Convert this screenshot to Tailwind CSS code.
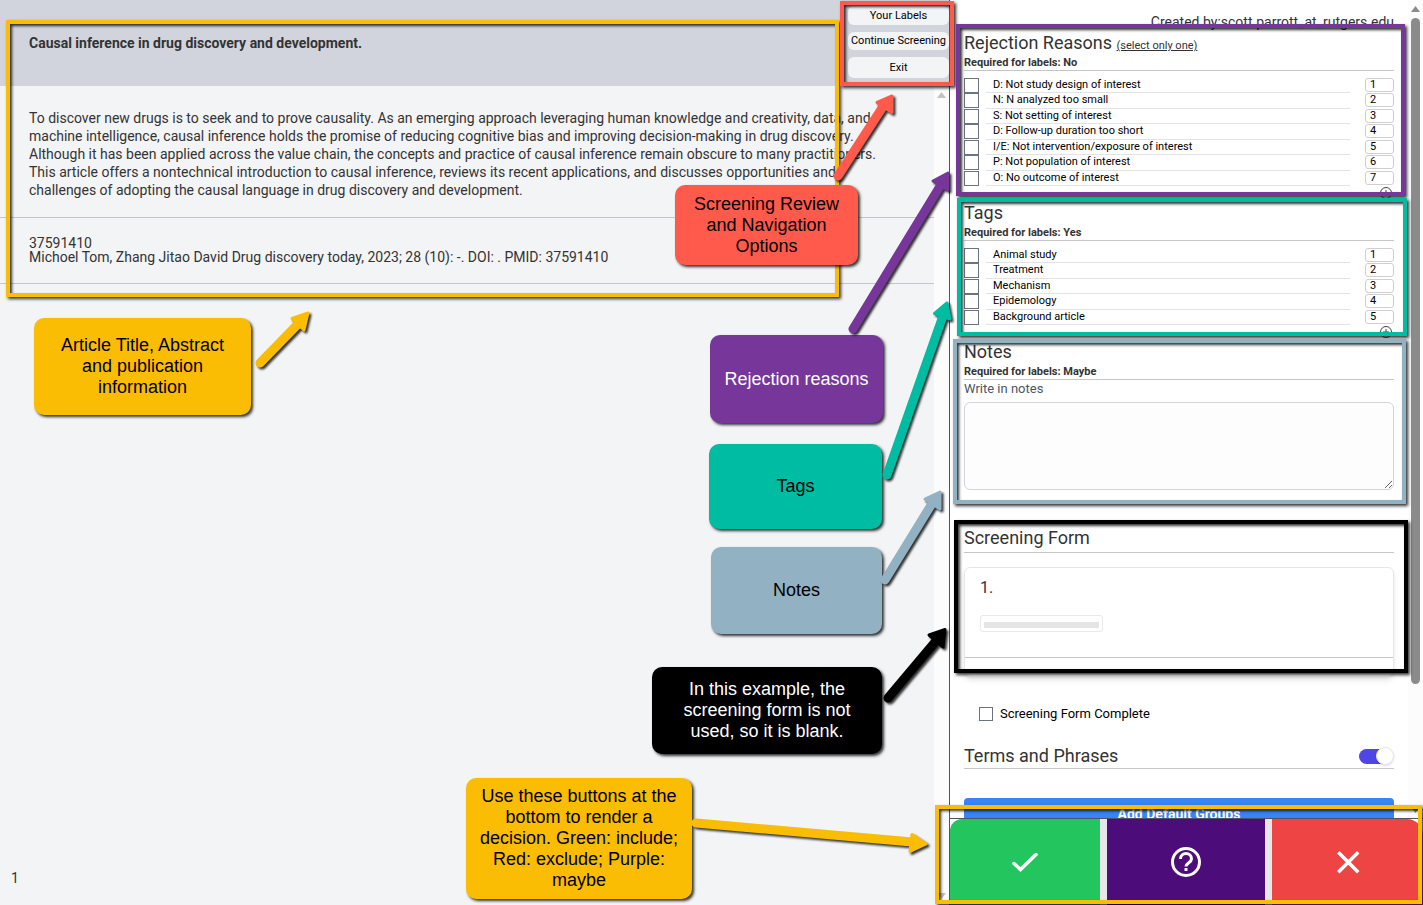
<!DOCTYPE html>
<html lang="en">
<head>
<meta charset="utf-8">
<title>Article Screening</title>
<script src="https://cdn.jsdelivr.net/npm/@tailwindcss/browser@4"></script>
</head>
<body class="relative flex h-screen overflow-hidden bg-white font-['Roboto',sans-serif] text-[#333]">

<main class="flex min-w-0 flex-1 flex-col bg-[#f3f4f6]">
  <header class="flex h-[86px] shrink-0 bg-[#d1d4dc]">
    <h1 class="flex-1 pt-[34px] pl-[29px] text-sm leading-[18px] font-bold">Causal inference in drug discovery and development.</h1>
    <nav class="flex w-[101px] flex-col gap-[7px] pt-[6px] text-[11px] leading-[18px] text-black">
      <button class="h-[19px] rounded-md bg-[#f3f4f6]">Your Labels</button>
      <button class="h-[18px] rounded-md bg-[#f3f4f6]">Continue Screening</button>
      <button class="h-[21px] rounded-md bg-[#f3f4f6]">Exit</button>
    </nav>
  </header>
  <div class="flex min-h-0 flex-1">
    <div class="flex min-w-0 flex-1 flex-col text-sm">
      <p class="border-b border-[#c4c6ca] pt-[23px] pr-[30px] pb-[18px] pl-[29px] leading-[18px]">To discover new drugs is to seek and to prove causality. As an emerging approach leveraging human knowledge and creativity, data, and machine intelligence, causal inference holds the promise of reducing cognitive bias and improving decision-making in drug discovery. Although it has been applied across the value chain, the concepts and practice of causal inference remain obscure to many practitioners. This article offers a nontechnical introduction to causal inference, reviews its recent applications, and discusses opportunities and challenges of adopting the causal language in drug discovery and development.</p>
      <div class="border-b border-[#c4c6ca] pt-[18px] pb-[19px] pl-[29px] leading-[14px]">
        <p>37591410</p>
        <p>Michoel Tom, Zhang Jitao David Drug discovery today, 2023; 28 (10): -. DOI: . PMID: 37591410</p>
      </div>
      <p class="mt-auto pb-[18px] pl-[11px] leading-[18px]">1</p>
    </div>
    <div class="flex w-[15px] flex-col items-center justify-between bg-[#fcfcfc] py-[6px]">
      <svg class="h-[6px] w-[9px]" viewBox="0 0 9 6"><path d="M4.500 0L9 6H0z" fill="#c2c2c2"/></svg>
      <svg class="h-[6px] w-[9px]" viewBox="0 0 9 6"><path d="M4.500 6L9 0H0z" fill="#c2c2c2"/></svg>
    </div>
  </div>
</main>

<aside class="flex w-[474px] shrink-0 flex-col border-l border-[#4b5563] bg-white">
  <div class="flex min-h-0 flex-1 overflow-hidden">
    <div class="min-w-0 flex-1 overflow-hidden pr-[14px] pl-[14px]">
      <p class="pt-[13px] text-right text-sm leading-[18px]">Created by:scott.parrott_at_rutgers.edu</p>

      <section>
        <h2 class="text-lg leading-6">Rejection Reasons <a href="#" class="text-[11px] leading-none underline">(select only one)</a></h2>
        <p class="border-b border-[#c4c6ca] text-[11px] leading-[15px] font-bold">Required for labels: No</p>
        <div class="mt-[7px] flex h-[108px] flex-col text-[11px] leading-[14px] text-black">
          <div class="flex flex-1 gap-[7px]"><input id="r1" type="checkbox" class="size-[15px] appearance-none border border-[#6b7280] bg-white"><label for="r1" class="mr-[8px] flex-1 border-b border-[#e2e3e5] pl-[7px] leading-[13px]">D: Not study design of interest</label><input aria-label="Shortcut" value="1" class="h-[14px] w-[29px] rounded-[3px] border border-[#cfcfcf] px-[4px] outline-none"></div>
          <div class="flex flex-1 gap-[7px]"><input id="r2" type="checkbox" class="size-[15px] appearance-none border border-[#6b7280] bg-white"><label for="r2" class="mr-[8px] flex-1 border-b border-[#e2e3e5] pl-[7px] leading-[13px]">N: N analyzed too small</label><input aria-label="Shortcut" value="2" class="h-[14px] w-[29px] rounded-[3px] border border-[#cfcfcf] px-[4px] outline-none"></div>
          <div class="flex flex-1 gap-[7px]"><input id="r3" type="checkbox" class="size-[15px] appearance-none border border-[#6b7280] bg-white"><label for="r3" class="mr-[8px] flex-1 border-b border-[#e2e3e5] pl-[7px] leading-[13px]">S: Not setting of interest</label><input aria-label="Shortcut" value="3" class="h-[14px] w-[29px] rounded-[3px] border border-[#cfcfcf] px-[4px] outline-none"></div>
          <div class="flex flex-1 gap-[7px]"><input id="r4" type="checkbox" class="size-[15px] appearance-none border border-[#6b7280] bg-white"><label for="r4" class="mr-[8px] flex-1 border-b border-[#e2e3e5] pl-[7px] leading-[13px]">D: Follow-up duration too short</label><input aria-label="Shortcut" value="4" class="h-[14px] w-[29px] rounded-[3px] border border-[#cfcfcf] px-[4px] outline-none"></div>
          <div class="flex flex-1 gap-[7px]"><input id="r5" type="checkbox" class="size-[15px] appearance-none border border-[#6b7280] bg-white"><label for="r5" class="mr-[8px] flex-1 border-b border-[#e2e3e5] pl-[7px] leading-[13px]">I/E: Not intervention/exposure of interest</label><input aria-label="Shortcut" value="5" class="h-[14px] w-[29px] rounded-[3px] border border-[#cfcfcf] px-[4px] outline-none"></div>
          <div class="flex flex-1 gap-[7px]"><input id="r6" type="checkbox" class="size-[15px] appearance-none border border-[#6b7280] bg-white"><label for="r6" class="mr-[8px] flex-1 border-b border-[#e2e3e5] pl-[7px] leading-[13px]">P: Not population of interest</label><input aria-label="Shortcut" value="6" class="h-[14px] w-[29px] rounded-[3px] border border-[#cfcfcf] px-[4px] outline-none"></div>
          <div class="flex flex-1 gap-[7px]"><input id="r7" type="checkbox" class="size-[15px] appearance-none border border-[#6b7280] bg-white"><label for="r7" class="mr-[8px] flex-1 border-b border-[#e2e3e5] pl-[7px] leading-[13px]">O: No outcome of interest</label><input aria-label="Shortcut" value="7" class="h-[14px] w-[29px] rounded-[3px] border border-[#cfcfcf] px-[4px] outline-none"></div>
        </div>
        <div class="flex h-[15px] justify-end pt-px pr-[2px]"><button aria-label="Add reason" class="size-[12px]"><svg viewBox="0 0 12 12" fill="none" stroke="#444"><circle cx="6" cy="6" r="5.500"/><path d="M6 3v6M3 6h6"/></svg></button></div>
      </section>

      <section>
        <h2 class="text-lg leading-6">Tags</h2>
        <p class="border-b border-[#c4c6ca] text-[11px] leading-[15px] font-bold">Required for labels: Yes</p>
        <div class="mt-[7px] flex h-[77px] flex-col text-[11px] leading-[14px] text-black">
          <div class="flex flex-1 gap-[7px]"><input id="t1" type="checkbox" class="size-[15px] appearance-none border border-[#6b7280] bg-white"><label for="t1" class="mr-[8px] flex-1 border-b border-[#e2e3e5] pl-[7px] leading-[13px]">Animal study</label><input aria-label="Shortcut" value="1" class="h-[14px] w-[29px] rounded-[3px] border border-[#cfcfcf] px-[4px] outline-none"></div>
          <div class="flex flex-1 gap-[7px]"><input id="t2" type="checkbox" class="size-[15px] appearance-none border border-[#6b7280] bg-white"><label for="t2" class="mr-[8px] flex-1 border-b border-[#e2e3e5] pl-[7px] leading-[13px]">Treatment</label><input aria-label="Shortcut" value="2" class="h-[14px] w-[29px] rounded-[3px] border border-[#cfcfcf] px-[4px] outline-none"></div>
          <div class="flex flex-1 gap-[7px]"><input id="t3" type="checkbox" class="size-[15px] appearance-none border border-[#6b7280] bg-white"><label for="t3" class="mr-[8px] flex-1 border-b border-[#e2e3e5] pl-[7px] leading-[13px]">Mechanism</label><input aria-label="Shortcut" value="3" class="h-[14px] w-[29px] rounded-[3px] border border-[#cfcfcf] px-[4px] outline-none"></div>
          <div class="flex flex-1 gap-[7px]"><input id="t4" type="checkbox" class="size-[15px] appearance-none border border-[#6b7280] bg-white"><label for="t4" class="mr-[8px] flex-1 border-b border-[#e2e3e5] pl-[7px] leading-[13px]">Epidemology</label><input aria-label="Shortcut" value="4" class="h-[14px] w-[29px] rounded-[3px] border border-[#cfcfcf] px-[4px] outline-none"></div>
          <div class="flex flex-1 gap-[7px]"><input id="t5" type="checkbox" class="size-[15px] appearance-none border border-[#6b7280] bg-white"><label for="t5" class="mr-[8px] flex-1 border-b border-[#e2e3e5] pl-[7px] leading-[13px]">Background article</label><input aria-label="Shortcut" value="5" class="h-[14px] w-[29px] rounded-[3px] border border-[#cfcfcf] px-[4px] outline-none"></div>
        </div>
        <div class="flex h-[15px] justify-end pt-px pr-[2px]"><button aria-label="Add tag" class="size-[12px]"><svg viewBox="0 0 12 12" fill="none" stroke="#444"><circle cx="6" cy="6" r="5.500"/><path d="M6 3v6M3 6h6"/></svg></button></div>
      </section>

      <section>
        <h2 class="text-lg leading-6">Notes</h2>
        <p class="border-b border-[#c4c6ca] text-[11px] leading-[15px] font-bold">Required for labels: Maybe</p>
        <label for="notes" class="block text-[13px] leading-[18px] text-[#4b5563]">Write in notes</label>
        <textarea id="notes" class="mt-[4px] block h-[88px] w-full rounded-md border border-[#d1d5db] bg-[#fdfdfd]"></textarea>
      </section>

      <section class="pt-9">
        <h2 class="border-b border-[#c4c6ca] pb-[2px] text-lg leading-6">Screening Form</h2>
        <div class="mt-[14px] h-[110px] rounded-md border border-[#e5e7eb] pt-[10px] shadow-md">
          <p class="pl-[15px] text-base leading-5">1.</p>
          <div class="mt-[17px] ml-[15px] h-[17px] w-[123px] rounded-[3px] border border-[#e8e8e8] px-[3px] pt-[6px]"><div class="h-[6px] bg-[#e5e5e5]"></div></div>
          <div class="mt-[25px] border-t border-[#c4c6ca]"></div>
        </div>
        <div class="flex items-center gap-[7px] pt-[27px] pl-[15px] text-[13px] leading-5 text-black">
          <input id="done" type="checkbox" class="size-[14px] appearance-none border border-[#6b7280] bg-white"><label for="done">Screening Form Complete</label>
        </div>
      </section>

      <section class="pt-5">
        <div class="flex items-center justify-between border-b border-[#c4c6ca]">
          <h2 class="text-lg leading-6">Terms and Phrases</h2>
          <button role="switch" aria-checked="true" aria-label="Terms and Phrases" class="flex h-[15px] w-[35px] items-center justify-end rounded-full bg-gradient-to-r from-[#4f46e5] from-80% to-white to-80%"><span class="size-[18px] shrink-0 rounded-full border border-[#e5e7eb] bg-white shadow-sm"></span></button>
        </div>
        <button class="mt-[29px] h-8 w-full rounded-t bg-[#3b82f6] text-sm leading-5 font-bold text-white">Add Default Groups</button>
      </section>
    </div>
    <div class="flex w-[15px] shrink-0 flex-col items-center bg-[#fcfcfc] pt-[6px]">
      <svg class="h-[6px] w-[9px] shrink-0" viewBox="0 0 9 6"><path d="M4.500 0L9 6H0z" fill="#8b8b8b"/></svg>
      <div class="mt-[6px] h-[666px] w-[9px] shrink-0 rounded-full bg-[#8b8b8b]"></div>
      <svg class="mt-auto mb-[5px] h-[6px] w-[9px] shrink-0" viewBox="0 0 9 6"><path d="M4.500 6L9 0H0z" fill="#8b8b8b"/></svg>
    </div>
  </div>
  <div class="flex h-[87px] shrink-0 border-t border-[#4b5563] text-white">
    <button aria-label="Include" class="flex w-[150px] justify-center rounded-tl-xl bg-[#22c55e] pt-[25px]"><svg class="size-9" viewBox="0 0 36 36" fill="none" stroke="currentColor" stroke-width="3.500" stroke-linecap="round"><path d="M7 19.500L13.500 25.500L29 10.500"/></svg></button>
    <button aria-label="Maybe" class="flex w-[172px] justify-center border-x-[7px] border-[#e5e7eb] bg-[#4c0d7b] pt-[25px]"><svg class="size-9" viewBox="0 0 36 36" fill="none" stroke="currentColor" stroke-width="3"><circle cx="18" cy="18" r="13.500"/><path d="M12.500 15c0-7.200 11-7.200 11 0c0 3.600-5.500 3.800-5.500 7.500"/><path d="M18 24v3"/></svg></button>
    <button aria-label="Exclude" class="flex flex-1 justify-center rounded-tr-2xl bg-[#ef4444] pt-[25px]"><svg class="size-9" viewBox="0 0 36 36" fill="none" stroke="currentColor" stroke-width="3.500" stroke-linecap="square"><path d="M9.500 9.500L27 27M27 9.500L9.500 27"/></svg></button>
  </div>
</aside>

<!-- Annotation layer: frames, arrows and callouts over the page -->
<div class="pointer-events-none absolute top-0 left-0 h-[905px] w-[1423px] font-['Liberation_Sans',sans-serif] text-lg leading-[21px] text-black">
  <div class="absolute top-[20px] left-[6px] h-[277px] w-[833px] border-4 border-[#fbbc04] shadow-[2px_2px_3px_rgba(0,0,0,0.8),inset_2px_2px_3px_rgba(0,0,0,0.8)]"></div>
  <div class="absolute top-[1px] left-[840px] h-[85px] w-[114px] border-4 border-[#ff5a4c] shadow-[2px_2px_3px_rgba(0,0,0,0.8),inset_2px_2px_3px_rgba(0,0,0,0.8)]"></div>
  <div class="absolute top-[24px] left-[956px] h-[172px] w-[449px] border-4 border-[#773699] shadow-[2px_2px_3px_rgba(0,0,0,0.8),inset_2px_2px_3px_rgba(0,0,0,0.8)]"></div>
  <div class="absolute top-[198px] left-[957px] h-[138px] w-[450px] border-4 border-[#00bca2] shadow-[2px_2px_3px_rgba(0,0,0,0.8),inset_2px_2px_3px_rgba(0,0,0,0.8)]"></div>
  <div class="absolute top-[339px] left-[953px] h-[165px] w-[453px] border-4 border-[#92b1c2] shadow-[2px_2px_3px_rgba(0,0,0,0.8),inset_2px_2px_3px_rgba(0,0,0,0.8)]"></div>
  <div class="absolute top-[520px] left-[954px] h-[153px] w-[454px] border-4 border-black shadow-[2px_2px_3px_rgba(0,0,0,0.8),inset_2px_2px_3px_rgba(0,0,0,0.8)]"></div>
  <div class="absolute top-[805px] left-[935px] h-[99px] w-[487px] border-4 border-[#fbbc04] shadow-[2px_2px_3px_rgba(0,0,0,0.8),inset_2px_2px_3px_rgba(0,0,0,0.8)]"></div>

  <div class="absolute top-[318px] left-[34px] flex h-[97px] w-[217px] items-center justify-center rounded-[10px] bg-[#fbbc04] text-center shadow-[2px_2px_3px_rgba(0,0,0,0.8)]">Article Title, Abstract<br>and publication<br>information</div>
  <div class="absolute top-[185px] left-[675px] flex h-[80px] w-[183px] items-center justify-center rounded-[10px] bg-[#ff5a4c] text-center shadow-[2px_2px_3px_rgba(0,0,0,0.8)]">Screening Review<br>and Navigation<br>Options</div>
  <div class="absolute top-[335px] left-[710px] flex h-[88px] w-[173px] items-center justify-center rounded-[10px] bg-[#773699] text-center text-white shadow-[2px_2px_3px_rgba(0,0,0,0.8)]">Rejection reasons</div>
  <div class="absolute top-[444px] left-[709px] flex h-[85px] w-[173px] items-center justify-center rounded-[10px] bg-[#00bca2] text-center shadow-[2px_2px_3px_rgba(0,0,0,0.8)]">Tags</div>
  <div class="absolute top-[547px] left-[711px] flex h-[87px] w-[171px] items-center justify-center rounded-[10px] bg-[#92b1c2] text-center shadow-[2px_2px_3px_rgba(0,0,0,0.8)]">Notes</div>
  <div class="absolute top-[667px] left-[652px] flex h-[87px] w-[230px] items-center justify-center rounded-[10px] bg-black text-center text-white shadow-[2px_2px_3px_rgba(0,0,0,0.8)]">In this example, the<br>screening form is not<br>used, so it is blank.</div>
  <div class="absolute top-[778px] left-[466px] flex h-[121px] w-[226px] items-center justify-center rounded-[10px] bg-[#fbbc04] text-center shadow-[2px_2px_3px_rgba(0,0,0,0.8)]">Use these buttons at the<br>bottom to render a<br>decision. Green: include;<br>Red: exclude; Purple:<br>maybe</div>

  <svg class="absolute inset-0 size-full drop-shadow-[2px_2px_1px_rgba(0,0,0,0.8)]" viewBox="0 0 1423 905" stroke-linecap="round" stroke-linejoin="round">
    <g stroke="#fbbc04" fill="#fbbc04"><path d="M260 363L300 322" stroke-width="9"/><path d="M308 313L292 318.500L304 330z" stroke-width="3"/></g>
    <g stroke="#ff5a4c" fill="#ff5a4c"><path d="M838 176L884 105" stroke-width="9"/><path d="M892 96L877 102.500L892 112.500z" stroke-width="3"/></g>
    <g stroke="#773699" fill="#773699"><path d="M853 329L942 183" stroke-width="9"/><path d="M948 173L933 181L948 190z" stroke-width="3"/></g>
    <g stroke="#00bca2" fill="#00bca2"><path d="M887 475L944 313" stroke-width="9"/><path d="M947 303L934.500 313.500L950 319z" stroke-width="3"/></g>
    <g stroke="#92b1c2" fill="#92b1c2"><path d="M885 580L933 502" stroke-width="9"/><path d="M940 492L925 499L940 509z" stroke-width="3"/></g>
    <g stroke="#000" fill="#000"><path d="M888 698L936 641" stroke-width="9"/><path d="M945 629.500L929 635L943 647z" stroke-width="3"/></g>
    <g stroke="#fbbc04" fill="#fbbc04"><path d="M696 823L912 842" stroke-width="9"/><path d="M926 844L912 834.500L910 851.500z" stroke-width="3"/></g>
  </svg>
</div>
</body>
</html>
